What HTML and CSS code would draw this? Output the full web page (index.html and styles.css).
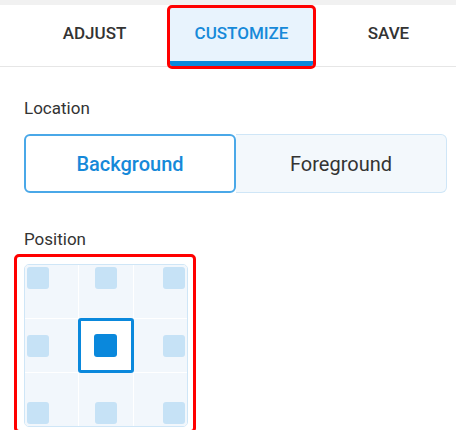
FILE: index.html
```html
<!DOCTYPE html>
<html lang="en">
<head>
  <meta charset="UTF-8" />
  <title>Customize</title>
  <link rel="stylesheet" href="styles.css">
</head>
<body>

  <div class="topband"></div>

  <nav class="tabs">
    <div class="tab">ADJUST</div>
    <div class="tab active">CUSTOMIZE</div>
    <div class="tab">SAVE</div>
  </nav>

  <main class="panel">
    <div class="label label-location">Location</div>
    <div class="segmented">
      <div class="seg selected">Background</div>
      <div class="seg">Foreground</div>
    </div>

    <div class="label label-position">Position</div>
    <div class="grid-wrap">
      <div class="pos-grid">
        <div class="cell top left"><span class="dot"></span></div>
        <div class="cell top center"><span class="dot"></span></div>
        <div class="cell top right"><span class="dot"></span></div>
        <div class="cell middle left"><span class="dot"></span></div>
        <div class="cell middle center current"><span class="dot"></span></div>
        <div class="cell middle right"><span class="dot"></span></div>
        <div class="cell bottom left"><span class="dot"></span></div>
        <div class="cell bottom center"><span class="dot"></span></div>
        <div class="cell bottom right"><span class="dot"></span></div>
      </div>
    </div>
  </main>

</body>
</html>
```

FILE: styles.css
```css
body {
  margin: 0;
  background: #fff;
  color: #333;
  font-family: Roboto, 'Liberation Sans', sans-serif;
}

.topband {
  height: 5px;
  background: #f1f1f1;
}

.tabs {
  display: flex;
  gap: 4px;
  padding: 3px 0 0 23px;
  border-bottom: 1px solid #e6e6e6;
}

.tab {
  flex: 0 0 143px;
  height: 58px;
  box-sizing: border-box;
  display: flex;
  align-items: center;
  justify-content: center;
  padding-bottom: 9px;
  font-size: 17px;
  font-weight: 500;
  color: #333;
}

.tab.active {
  background: #e8f3fd;
  color: #1689d9;
  border-bottom: 5px solid #0a88dc;
  padding-bottom: 4px;
  outline: 3px solid #f00;
  border-radius: 2px;
}

.panel {
  padding: 0 9px 0 24px;
}

.label {
  font-size: 17px;
  line-height: 20px;
  color: #333;
}

.label-location {
  margin-top: 31px;
}

.segmented {
  display: flex;
  margin-top: 16px;
  height: 59px;
}

.seg {
  flex: 1;
  display: flex;
  align-items: center;
  justify-content: center;
  font-size: 20px;
  color: #333;
  background: #f3f8fc;
  border: 1px solid #cfe6f7;
  border-left: none;
  border-radius: 0 6px 6px 0;
}

.seg.selected {
  flex: 0 0 212px;
  box-sizing: border-box;
  background: #fff;
  color: #1689d9;
  font-weight: 500;
  border: 2px solid #4aa8e8;
  border-radius: 6px;
}

.label-position {
  margin-top: 36px;
}

.grid-wrap {
  display: inline-block;
  margin: 8px 0 0 -7px;
  padding: 7px 5px 3px 7px;
  outline: 3px solid #f00;
  border-radius: 2px;
}

.pos-grid {
  width: 164px;
  height: 163px;
  box-sizing: border-box;
  display: grid;
  grid-template-columns: repeat(3, 1fr);
  grid-template-rows: repeat(3, 1fr);
  gap: 1px;
  background: #fff;
  border: 1px solid #cfe6f7;
  border-radius: 5px;
  overflow: hidden;
}

.cell {
  display: flex;
  padding: 2px;
  background: #f2f7fc;
}

.cell.top { align-items: flex-start; }
.cell.middle { align-items: center; }
.cell.bottom { align-items: flex-end; }
.cell.left { justify-content: flex-start; }
.cell.center { justify-content: center; }
.cell.right { justify-content: flex-end; }

.dot {
  width: 22px;
  height: 22px;
  border-radius: 3px;
  background: #c6e2f6;
}

.cell.current {
  background: #fff;
  border: 3px solid #0a88dc;
  border-radius: 3px;
  margin: -1px;
}

.cell.current .dot {
  width: 23px;
  height: 23px;
  background: #0a88dc;
}
```
